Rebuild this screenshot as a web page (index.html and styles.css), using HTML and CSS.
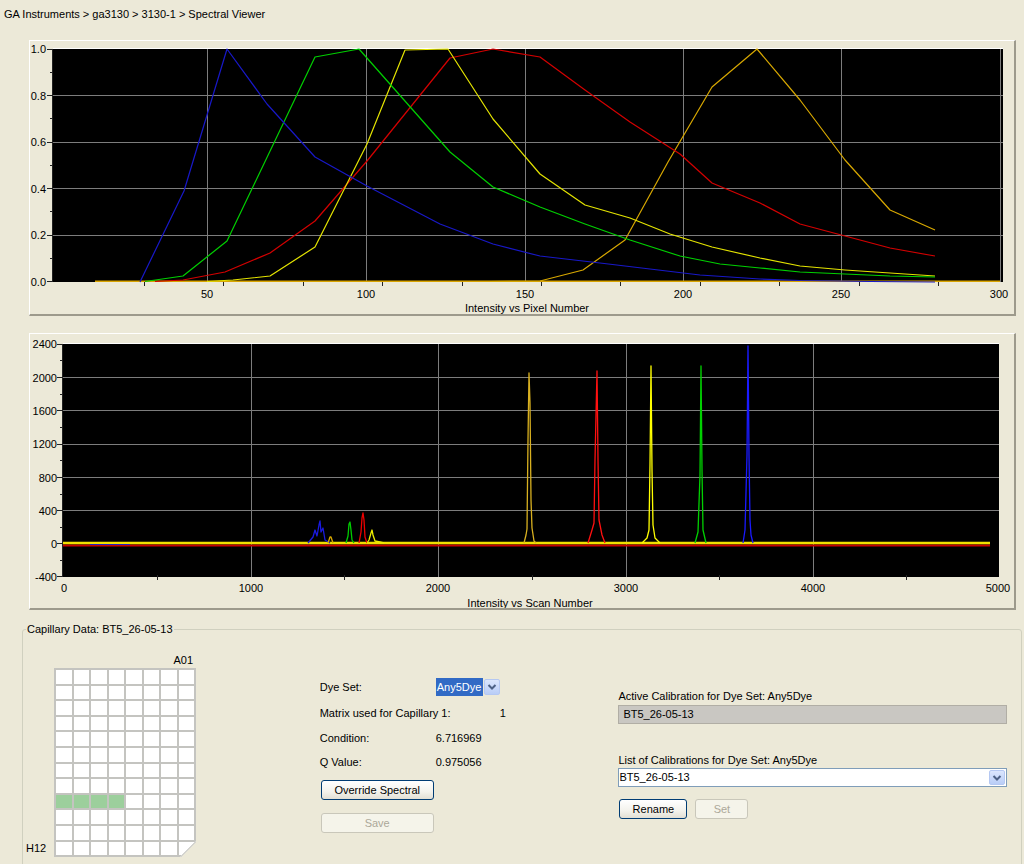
FILE: index.html
```html
<!DOCTYPE html>
<html>
<head>
<meta charset="utf-8">
<title>Spectral Viewer</title>
<link rel="stylesheet" href="styles.css">
</head>
<body>
<div class="crumb">GA Instruments &gt; ga3130 &gt; 3130-1 &gt; Spectral Viewer</div>

<div class="panel panel1">
<svg class="chart" width="984" height="273" viewBox="30 41 984 273" xmlns="http://www.w3.org/2000/svg">
  <rect x="53" y="49" width="950" height="233" fill="#000"/>
  <line x1="53" y1="48.5" x2="1003" y2="48.5" stroke="#fff"/>
  <g stroke="#7d7d7d" stroke-width="1">
    <line x1="207.5" y1="49" x2="207.5" y2="282"/>
    <line x1="366.5" y1="49" x2="366.5" y2="282"/>
    <line x1="525.5" y1="49" x2="525.5" y2="282"/>
    <line x1="683.5" y1="49" x2="683.5" y2="282"/>
    <line x1="841.5" y1="49" x2="841.5" y2="282"/>
    <line x1="1000.5" y1="49" x2="1000.5" y2="282"/>
    <line x1="53" y1="95.5" x2="1003" y2="95.5"/>
    <line x1="53" y1="142.5" x2="1003" y2="142.5"/>
    <line x1="53" y1="188.5" x2="1003" y2="188.5"/>
    <line x1="53" y1="235.5" x2="1003" y2="235.5"/>
  </g>
  <g stroke="#222" stroke-width="1">
    <line x1="52.5" y1="49" x2="52.5" y2="282"/>
    <line x1="47" y1="49.5" x2="53" y2="49.5"/>
    <line x1="47" y1="95.5" x2="53" y2="95.5"/>
    <line x1="47" y1="142.5" x2="53" y2="142.5"/>
    <line x1="47" y1="188.5" x2="53" y2="188.5"/>
    <line x1="47" y1="235.5" x2="53" y2="235.5"/>
    <line x1="47" y1="281.5" x2="53" y2="281.5"/>
    <line x1="50" y1="72.5" x2="53" y2="72.5"/>
    <line x1="50" y1="118.5" x2="53" y2="118.5"/>
    <line x1="50" y1="165.5" x2="53" y2="165.5"/>
    <line x1="50" y1="211.5" x2="53" y2="211.5"/>
    <line x1="50" y1="258.5" x2="53" y2="258.5"/>
    <line x1="144.5" y1="282" x2="144.5" y2="286"/>
    <line x1="223.5" y1="282" x2="223.5" y2="286"/>
    <line x1="303.5" y1="282" x2="303.5" y2="286"/>
    <line x1="382.5" y1="282" x2="382.5" y2="286"/>
    <line x1="462.5" y1="282" x2="462.5" y2="286"/>
    <line x1="541.5" y1="282" x2="541.5" y2="286"/>
    <line x1="620.5" y1="282" x2="620.5" y2="286"/>
    <line x1="700.5" y1="282" x2="700.5" y2="286"/>
    <line x1="779.5" y1="282" x2="779.5" y2="286"/>
    <line x1="859.5" y1="282" x2="859.5" y2="286"/>
    <line x1="938.5" y1="282" x2="938.5" y2="286"/>
  </g>
  <g class="ax" text-anchor="end">
    <text x="46" y="53">1.0</text>
    <text x="46" y="99.5">0.8</text>
    <text x="46" y="146">0.6</text>
    <text x="46" y="192.5">0.4</text>
    <text x="46" y="239">0.2</text>
    <text x="46" y="285.5">0.0</text>
  </g>
  <g class="ax" text-anchor="middle">
    <text x="207" y="298">50</text>
    <text x="366" y="298">100</text>
    <text x="525" y="298">150</text>
    <text x="683" y="298">200</text>
    <text x="841" y="298">250</text>
    <text x="999" y="298">300</text>
    <text x="527" y="312">Intensity vs Pixel Number</text>
  </g>
  <line x1="95" y1="281.3" x2="1000" y2="281.3" stroke="#d9a400" stroke-width="1.5"/>
  <g fill="none" stroke-width="1.2" stroke-linejoin="round">
    <polyline stroke="#d8a800" points="490,281.5 540,281 583,270 625,240 668,162 712,87 757,49 800,100 845,160 890,210 935,230"/>
    <polyline stroke="#d40000" points="155,281.5 183,280 225,272 270,253 315,221 367,161 450,58 493,49 540,57 585,90 630,122 680,154 712,183 760,203 800,224 845,236 890,248 935,256"/>
    <polyline stroke="#e4e400" points="207,281.5 233,280 270,276 315,247 367,144 405,50 448,49 493,119 540,174 585,205 630,218 670,234 712,247 760,258 800,266 845,270 890,273 935,276"/>
    <polyline stroke="#00d000" points="145,281.5 183,276 227,241 315,57 359,49 450,152 493,187 540,207 585,224 630,240 680,256 720,264 760,268 800,272 845,274 890,276 935,277"/>
    <polyline stroke="#1818c8" points="140,282 184,191 227,49 267,104 315,157 367,186 440,224 493,244 540,256 600,263 650,269 700,275 760,279 800,280.5 870,281.5 935,282"/>
  </g>
</svg>
</div>

<div class="panel panel2">
<svg class="chart" width="984" height="274" viewBox="30 334 984 274" xmlns="http://www.w3.org/2000/svg">
  <rect x="63" y="344" width="936" height="233" fill="#000"/>
  <line x1="63" y1="343.5" x2="999" y2="343.5" stroke="#fff"/>
  <g stroke="#7d7d7d" stroke-width="1">
    <line x1="251.5" y1="344" x2="251.5" y2="577"/>
    <line x1="438.5" y1="344" x2="438.5" y2="577"/>
    <line x1="626.5" y1="344" x2="626.5" y2="577"/>
    <line x1="813.5" y1="344" x2="813.5" y2="577"/>
    <line x1="63" y1="377.5" x2="999" y2="377.5"/>
    <line x1="63" y1="410.5" x2="999" y2="410.5"/>
    <line x1="63" y1="444.5" x2="999" y2="444.5"/>
    <line x1="63" y1="477.5" x2="999" y2="477.5"/>
    <line x1="63" y1="510.5" x2="999" y2="510.5"/>
  </g>
  <g stroke="#222" stroke-width="1">
    <line x1="62.5" y1="344" x2="62.5" y2="577"/>
    <line x1="57" y1="344.5" x2="63" y2="344.5"/>
    <line x1="57" y1="377.5" x2="63" y2="377.5"/>
    <line x1="57" y1="410.5" x2="63" y2="410.5"/>
    <line x1="57" y1="444.5" x2="63" y2="444.5"/>
    <line x1="57" y1="477.5" x2="63" y2="477.5"/>
    <line x1="57" y1="510.5" x2="63" y2="510.5"/>
    <line x1="57" y1="543.5" x2="63" y2="543.5"/>
    <line x1="57" y1="576.5" x2="63" y2="576.5"/>
    <line x1="60" y1="360.5" x2="63" y2="360.5"/>
    <line x1="60" y1="394.5" x2="63" y2="394.5"/>
    <line x1="60" y1="427.5" x2="63" y2="427.5"/>
    <line x1="60" y1="460.5" x2="63" y2="460.5"/>
    <line x1="60" y1="494.5" x2="63" y2="494.5"/>
    <line x1="60" y1="527.5" x2="63" y2="527.5"/>
    <line x1="60" y1="560.5" x2="63" y2="560.5"/>
    <line x1="157.5" y1="575" x2="157.5" y2="580"/>
    <line x1="344.5" y1="575" x2="344.5" y2="580"/>
    <line x1="532.5" y1="575" x2="532.5" y2="580"/>
    <line x1="719.5" y1="575" x2="719.5" y2="580"/>
    <line x1="906.5" y1="575" x2="906.5" y2="580"/>
  </g>
  <g class="ax" text-anchor="end">
    <text x="57" y="348">2400</text>
    <text x="57" y="381.5">2000</text>
    <text x="57" y="414.5">1600</text>
    <text x="57" y="448">1200</text>
    <text x="57" y="481.5">800</text>
    <text x="57" y="514.5">400</text>
    <text x="57" y="547.5">0</text>
    <text x="57" y="580.5">-400</text>
  </g>
  <g class="ax" text-anchor="middle">
    <text x="64" y="592">0</text>
    <text x="251" y="592">1000</text>
    <text x="438" y="592">2000</text>
    <text x="626" y="592">3000</text>
    <text x="813" y="592">4000</text>
    <text x="998" y="592">5000</text>
    <text x="530" y="607">Intensity vs Scan Number</text>
  </g>
  <line x1="63" y1="545.5" x2="990" y2="545.5" stroke="#c80000" stroke-width="2"/>
  <line x1="63" y1="543" x2="990" y2="543" stroke="#f0e000" stroke-width="2.5"/>
  <line x1="90" y1="544.5" x2="130" y2="544.5" stroke="#2020c0" stroke-width="1"/>
  <g fill="none" stroke-width="1.3" stroke-linejoin="round">
    <polyline stroke="#1a1ae0" points="308,543 313,537 315,530 317,536 319,525 320,521 321,532 323,528 325,540 330,543"/>
    <polyline stroke="#d8a800" points="328,543 330,537 331,537 333,543"/>
    <polyline stroke="#00cc00" points="346,543 348,536 349,524 350,522 351,530 352,540 354,543"/>
    <polyline stroke="#ee0000" points="359,543 361,532 362,518 363,513 364,520 365,537 367,543"/>
    <polyline stroke="#eeee00" points="367,543 369,540 371,533 372,530 373,535 375,541 380,542 384,543"/>
    <polyline stroke="#d8b020" points="524,543 526,535 527,529 528,440 529,373 530,403 531,500 532,528 534,541 536,543"/>
    <polyline stroke="#ff1010" points="588,543 592,530 594,523 595,460 597,371 598,460 599,520 602,535 605,543"/>
    <polyline stroke="#ffff00" points="642,543 647,538 649,530 650,465 651,366 652,470 653,525 655,538 660,543"/>
    <polyline stroke="#00d000" points="695,543 698,532 700,475 701,366 702,470 703,530 706,543"/>
    <polyline stroke="#1a1aff" points="743,543 745,530 747,455 748,346 749,455 750,520 751,535 753,543"/>
  </g>
</svg>
</div>

<fieldset class="cap">
  <legend>Capillary Data: BT5_26-05-13</legend>
  <div class="capbody">
    <div class="plate">
      <div class="a01">A01</div>
      <div class="plate-row">
        <div class="h12">H12</div>
        <div class="wells">
          <i></i><i></i><i></i><i></i><i></i><i></i><i></i><i></i>
          <i></i><i></i><i></i><i></i><i></i><i></i><i></i><i></i>
          <i></i><i></i><i></i><i></i><i></i><i></i><i></i><i></i>
          <i></i><i></i><i></i><i></i><i></i><i></i><i></i><i></i>
          <i></i><i></i><i></i><i></i><i></i><i></i><i></i><i></i>
          <i></i><i></i><i></i><i></i><i></i><i></i><i></i><i></i>
          <i></i><i></i><i></i><i></i><i></i><i></i><i></i><i></i>
          <i></i><i></i><i></i><i></i><i></i><i></i><i></i><i></i>
          <i class="on"></i><i class="on"></i><i class="on"></i><i class="on"></i><i></i><i></i><i></i><i></i>
          <i></i><i></i><i></i><i></i><i></i><i></i><i></i><i></i>
          <i></i><i></i><i></i><i></i><i></i><i></i><i></i><i></i>
          <i></i><i></i><i></i><i></i><i></i><i></i><i></i><i></i>
        </div>
      </div>
    </div>

    <div class="mid">
      <div class="row r1">
        <span class="lbl">Dye Set:</span>
        <span class="dyesel"><span class="dyetxt">Any5Dye</span><span class="arrow"><svg width="14" height="14" viewBox="0 0 14 14"><path d="M3.5 5 L7 8.5 L10.5 5" fill="none" stroke="#4d6185" stroke-width="2"/></svg></span></span>
      </div>
      <div class="row r2"><span class="lbl wide">Matrix used for Capillary 1:</span><span class="val">1</span></div>
      <div class="row r3"><span class="lbl">Condition:</span><span class="val">6.716969</span></div>
      <div class="row r4"><span class="lbl">Q Value:</span><span class="val">0.975056</span></div>
      <button class="btn b-over">Override Spectral</button>
      <button class="btn b-save" disabled>Save</button>
    </div>

    <div class="right">
      <div class="rlbl">Active Calibration for Dye Set: Any5Dye</div>
      <div class="active">BT5_26-05-13</div>
      <div class="rlbl l2">List of Calibrations for Dye Set: Any5Dye</div>
      <div class="combo"><span class="ctxt">BT5_26-05-13</span><span class="arrow"><svg width="14" height="14" viewBox="0 0 14 14"><path d="M3.5 5 L7 8.5 L10.5 5" fill="none" stroke="#4d6185" stroke-width="2"/></svg></span></div>
      <div class="btnrow">
        <button class="btn b-rename">Rename</button>
        <button class="btn b-set" disabled>Set</button>
      </div>
    </div>
  </div>
</fieldset>
</body>
</html>
```

FILE: styles.css
```css
html, body {
  margin: 0;
  padding: 0;
}
body {
  width: 1024px;
  height: 864px;
  overflow: hidden;
  background: #ece9d8;
  font-family: "Liberation Sans", Arial, sans-serif;
  font-size: 11px;
  color: #000;
}
.crumb {
  height: 40px;
  box-sizing: border-box;
  padding: 8px 0 0 4px;
  line-height: 13px;
}
.panel {
  margin-left: 29px;
  width: 987px;
  box-sizing: border-box;
  border-style: solid;
  border-width: 1px 2px 2px 1px;
  border-color: #ffffff #9d9a8c #9d9a8c #ffffff;
}
.panel1 { height: 276px; }
.panel2 { height: 277px; margin-top: 17px; }
.chart { display: block; }
.ax {
  font-family: "Liberation Sans", Arial, sans-serif;
  font-size: 11px;
  fill: #000;
}

.cap {
  margin: 12px 0 0 22px;
  width: 1000px;
  height: 260px;
  box-sizing: border-box;
  border: 1px solid #d0d0bf;
  border-radius: 3px;
  padding: 0 14px 0 3px;
  min-width: 0;
}
.cap legend {
  padding: 0 1px;
  margin-left: 0;
  line-height: 14px;
  font-size: 11px;
}
.capbody {
  display: flex;
}

.plate {
  width: 294px;
  padding-top: 18px;
}
.a01 {
  width: 167px;
  text-align: right;
  line-height: 13px;
  margin-bottom: 1px;
}
.plate-row {
  display: flex;
  align-items: flex-end;
}
.h12 {
  width: 28px;
  line-height: 13px;
  margin-bottom: 2px;
}
.wells {
  position: relative;
  display: grid;
  grid-template-columns: repeat(8, 15.5px);
  grid-auto-rows: 13.6px;
  gap: 2px;
  padding: 2px;
  background: #c4c4c0;
}
.wells i {
  display: block;
  background: #ffffff;
}
.wells i.on {
  background: #9ccf9c;
}
.wells::after {
  content: "";
  position: absolute;
  right: 0;
  bottom: 0;
  width: 16px;
  height: 16px;
  background: linear-gradient(to bottom right, transparent 0 47%, #d4d4d0 47% 54%, #ece9d8 54%);
}

.mid {
  width: 299px;
  padding-top: 42px;
  display: flex;
  flex-direction: column;
  align-items: flex-start;
}
.row {
  display: flex;
  align-items: center;
  height: 16px;
  line-height: 13px;
}
.row.r1 { height: 18px; }
.row.r2 { margin-top: 9px; }
.row.r3 { margin-top: 9px; }
.row.r4 { margin-top: 8px; }
.lbl {
  width: 116px;
  flex: none;
}
.lbl.wide { width: 180px; }
.dyesel {
  display: flex;
  height: 18px;
}
.dyetxt {
  background: #316ac5;
  color: #fff;
  width: 47px;
  padding-left: 1px;
  box-sizing: border-box;
  line-height: 18px;
}
.arrow {
  width: 16px;
  height: 16px;
  margin: 1px 0 0 1px;
  box-sizing: border-box;
  border: 1px solid #b5c8f2;
  border-radius: 2px;
  background: linear-gradient(#dbe6fd, #b9cdf7);
  display: flex;
  align-items: center;
  justify-content: center;
}
.arrow svg { display: block; }

.btn {
  display: block;
  height: 20px;
  box-sizing: border-box;
  border: 1px solid #003c74;
  border-radius: 3px;
  background: linear-gradient(#ffffff, #f3f2ec 60%, #e2dfd4);
  font-family: "Liberation Sans", Arial, sans-serif;
  font-size: 11px;
  color: #000;
  padding: 0;
  margin: 0;
}
.btn:disabled {
  border-color: #c9c7ba;
  background: #f5f4ea;
  color: #aca899;
}
.b-over {
  width: 113px;
  margin: 10px 0 0 1px;
}
.b-save {
  width: 113px;
  margin: 13px 0 0 1px;
}

.right {
  width: 389px;
  padding-top: 54px;
}
.rlbl {
  line-height: 13px;
}
.active {
  margin-top: 2px;
  height: 19px;
  box-sizing: border-box;
  background: #c9c7c2;
  border: 1px solid #b1aea5;
  padding-left: 4px;
  line-height: 17px;
}
.rlbl.l2 {
  margin-top: 30px;
}
.combo {
  margin-top: 1px;
  height: 19px;
  box-sizing: border-box;
  background: #fff;
  border: 1px solid #7f9db9;
  display: flex;
  align-items: center;
  justify-content: space-between;
  padding-right: 1px;
}
.combo .ctxt {
  line-height: 17px;
  padding-left: 0;
}
.combo .arrow {
  margin: 0;
  height: 15px;
}
.btnrow {
  display: flex;
  gap: 8px;
  margin-top: 12px;
  padding-left: 1px;
}
.b-rename { width: 68px; }
.b-set { width: 53px; }
```
